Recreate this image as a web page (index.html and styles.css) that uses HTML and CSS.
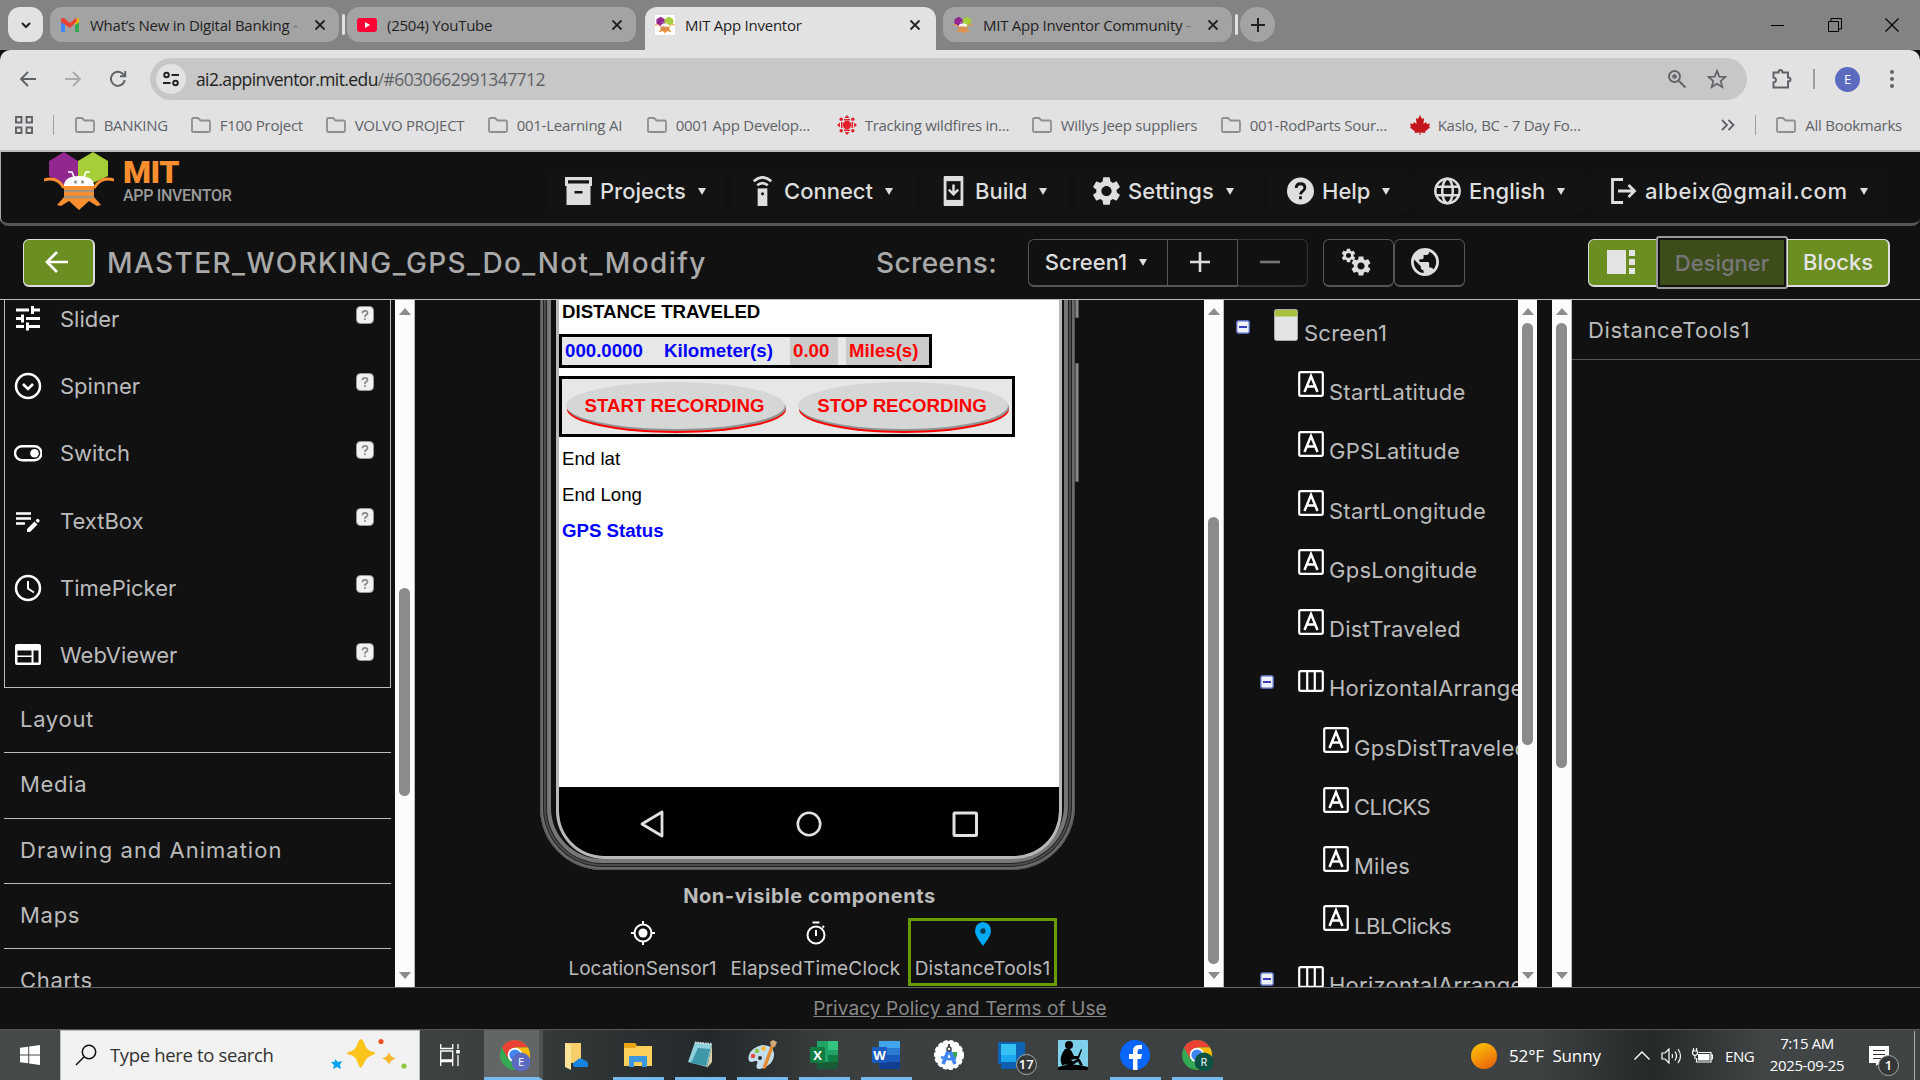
FILE: index.html
```html
<!DOCTYPE html>
<html lang="en">

<head>
    <meta charset="UTF-8">
    <title>MIT App Inventor</title>
    <link rel="stylesheet" href="styles.css">
</head>

<body>
    <!-- shared icons -->
    <svg class="defs">
        <symbol id="bee" viewBox="0 0 70 58">
            <path d="M5 9 20 0 34 9v22l-8 6L5 24z" fill="#92278f" />
            <path d="M34 9 49 0l15 9v15l-15 7-15-2z" fill="#a6ce39" />
            <path d="M0 28q13-4 20 8M70 28q-13-4-20 8" fill="none" stroke="#f98e2f" stroke-width="3" />
            <path d="M20 34h30v11l7 8-4 1-8-5-10 9-10-9-8 5-4-1 7-8z" fill="#f98e2f" />
            <path d="M20 34q0-10 15-10t15 10z" fill="#fff" />
            <path d="M30 25l-2-5h-4M40 25l2-5h4" fill="none" stroke="#fff" stroke-width="1.600" />
            <path d="M20 39h30M20 45h30" stroke="#a7937c" stroke-width="2.500" />
            <circle cx="31.500" cy="30" r="1.700" fill="#999" />
            <circle cx="38.500" cy="30" r="1.700" fill="#999" />
        </symbol>
        <symbol id="x" viewBox="0 0 12 12">
            <path d="M1.500 1.500l9 9M10.500 1.500l-9 9" stroke="#222" stroke-width="1.800" />
        </symbol>
        <symbol id="folder" viewBox="0 0 22 18">
            <path d="M2 3.500Q2 2 3.500 2H8l2.500 2.500h8Q20 4.500 20 6v8.500q0 1.500-1.500 1.500h-15Q2 16 2 14.500z" fill="none" stroke="#8e8e8e" stroke-width="1.800" />
        </symbol>
        <symbol id="help" viewBox="0 0 18 18">
            <rect x=".5" y=".5" width="17" height="17" rx="4" fill="#f1f1f1" stroke="#999" />
            <path d="M6.500 7.200q0-2.300 2.500-2.300t2.500 2.100q0 1.300-1.400 1.900T9 11M9 12.300v1.800" fill="none" stroke="#888" stroke-width="1.700" />
        </symbol>
        <symbol id="minus" viewBox="0 0 14 14">
            <rect x=".7" y=".7" width="12.600" height="12.600" rx="2" fill="#eef0fa" stroke="#5568b8" stroke-width="1.400" />
            <path d="M3 7h8" stroke="#2626b8" stroke-width="1.800" />
        </symbol>
        <symbol id="label" viewBox="0 0 26 26">
            <rect x="1.200" y="1.200" width="23.600" height="23.600" rx="1.500" fill="none" stroke="#fff" stroke-width="2.200" />
            <path d="M6.500 21 13 5l6.500 16M8.800 15.500h8.400" fill="none" stroke="#fff" stroke-width="2.500" />
        </symbol>
        <symbol id="columns" viewBox="0 0 26 22">
            <rect x="1.200" y="1.200" width="23.600" height="19.600" rx="1.500" fill="none" stroke="#fff" stroke-width="2.200" />
            <path d="M9.200 1v20M16.800 1v20" stroke="#fff" stroke-width="2.200" />
        </symbol>
        <symbol id="gear" viewBox="0 0 24 24">
            <path d="M19.140 12.940c.04-.3.060-.61.060-.94 0-.32-.02-.64-.07-.94l2.030-1.580c.18-.14.230-.41.120-.61l-1.920-3.320c-.12-.22-.37-.29-.59-.22l-2.390.960c-.5-.38-1.030-.7-1.620-.94l-.36-2.540c-.04-.24-.24-.41-.48-.41h-3.840c-.24 0-.43.170-.47.410l-.36 2.540c-.59.240-1.130.570-1.620.940l-2.390-.96c-.22-.08-.47 0-.59.220L2.740 8.870c-.12.210-.08.470.120.610l2.030 1.580c-.05.300-.09.630-.09.940s.02.640.070.940l-2.030 1.580c-.18.140-.23.410-.12.610l1.920 3.320c.12.220.370.290.590.220l2.390-.96c.5.380 1.030.700 1.620.940l.36 2.540c.05.240.240.410.480.410h3.840c.24 0 .44-.17.470-.41l.36-2.540c.59-.24 1.130-.56 1.620-.94l2.390.960c.22.080.470 0 .59-.22l1.920-3.320c.12-.22.070-.47-.12-.61l-2.010-1.580zM12 15.600c-1.980 0-3.600-1.620-3.600-3.600s1.620-3.600 3.600-3.600 3.600 1.620 3.600 3.600-1.620 3.600-3.600 3.600z" />
        </symbol>
        <symbol id="chrome" viewBox="0 0 32 32">
            <circle cx="16" cy="16" r="15" fill="#34a853" />
            <path d="M3 8.500A15 15 0 0 1 29 8.500H16l-7 11z" fill="#ea4335" />
            <path d="M29 8.500A15 15 0 0 1 16 31l7-11.500-7-11z" fill="#fbbc05" />
            <circle cx="16" cy="16" r="7.300" fill="#fff" />
            <circle cx="16" cy="16" r="5.600" fill="#4285f4" />
        </symbol>
    </svg>

    <!-- browser tabs -->
    <div class="tabstrip">
        <div class="tab-search"><svg width="12" height="12" viewBox="0 0 12 12"><path d="M2 4l4 4 4-4" fill="none" stroke="#222" stroke-width="2" /></svg></div>
        <div class="tab">
            <svg class="fav" viewBox="0 0 20 16"><path d="M1 15V3l4 3v9z" fill="#4285f4" /><path d="M15 15V6l4-3v12z" fill="#34a853" /><path d="M15 2l4-1v4l-4 3z" fill="#fbbc04" /><path d="M1 1.500 4 1l6 5 6-5 1 3-7 7L1 5z" fill="#ea4335" /></svg>
            <span>What’s New in Digital Banking <i>-</i></span>
            <svg class="close"><use href="#x" /></svg>
        </div>
        <div class="tab-sep"></div>
        <div class="tab">
            <svg class="fav" viewBox="0 0 20 16"><rect y="1" width="20" height="14" rx="3" fill="#f03" /><path d="M8 5l5 3-5 3z" fill="#fff" /></svg>
            <span>(2504) YouTube</span>
            <svg class="close"><use href="#x" /></svg>
        </div>
        <div class="tab tab-active">
            <svg class="fav fav-white"><use href="#bee" /></svg>
            <span>MIT App Inventor</span>
            <svg class="close"><use href="#x" /></svg>
        </div>
        <div class="tab">
            <svg class="fav"><use href="#bee" /></svg>
            <span>MIT App Inventor Community <i>-</i></span>
            <svg class="close"><use href="#x" /></svg>
        </div>
        <div class="tab-sep"></div>
        <div class="new-tab"><svg width="14" height="14" viewBox="0 0 14 14"><path d="M7 0v14M0 7h14" stroke="#222" stroke-width="2" /></svg></div>
        <div class="window-buttons">
            <svg width="14" height="14" viewBox="0 0 14 14"><path d="M0 7.500h13" stroke="#000" /></svg>
            <svg width="14" height="14" viewBox="0 0 14 14"><path d="M.5 3.500h10v10H.5zM3 3V.5h10.500V11H11" fill="none" stroke="#000" /></svg>
            <svg width="14" height="14" viewBox="0 0 14 14"><path d="M.5.500l13 13M13.500.500l-13 13" stroke="#000" stroke-width="1.200" /></svg>
        </div>
    </div>

    <!-- address bar -->
    <div class="chrome-bar">
        <div class="address-row">
            <div class="nav-icons">
                <svg width="18" height="18" viewBox="0 0 18 18"><path d="M17 9H2.500M9 2L2 9l7 7" fill="none" stroke="#5f6368" stroke-width="1.900" /></svg>
                <svg width="18" height="18" viewBox="0 0 18 18"><path d="M1 9h14.500M9 2l7 7-7 7" fill="none" stroke="#ababab" stroke-width="1.900" /></svg>
                <svg width="18" height="18" viewBox="0 0 18 18"><path d="M15.800 10A7 7 0 1 1 14 4l2 2M16.300 1v5.300H11" fill="none" stroke="#5f6368" stroke-width="1.900" /></svg>
            </div>
            <div class="omnibox">
                <div class="site-info"><svg width="16" height="16" viewBox="0 0 16 16"><g fill="none" stroke="#222" stroke-width="1.900"><circle cx="3.500" cy="4" r="2.300" /><circle cx="12.500" cy="12" r="2.300" /><path d="M8.500 4H16M0 12h7.500" /></g></svg></div>
                <p class="url">ai2.appinventor.mit.edu<span>/#6030662991347712</span></p>
                <svg width="20" height="20" viewBox="0 0 20 20"><g fill="none" stroke="#5f6368" stroke-width="1.900"><circle cx="7.500" cy="7.500" r="5.500" /><path d="M12 12l6.500 6.500M7.500 5v5M5 7.500h5" /></g></svg>
                <svg width="20" height="20" viewBox="0 0 20 20"><path d="M10 1.800l2.300 5.800 6.200.400-4.800 4 1.600 6.100L10 14.700l-5.300 3.400L6.300 12 1.500 8l6.200-.4z" fill="none" stroke="#5f6368" stroke-width="1.700" /></svg>
            </div>
            <svg class="puzzle" width="22" height="22" viewBox="0 0 22 22"><path d="M2.500 4.500h5q0-2.500 2-2.500t2 2.500h5.500v5q2.500 0 2.500 2t-2.500 2v6h-14.500v-5q2.500-.5 2.500-2.500t-2.500-2.500z" fill="none" stroke="#5f6368" stroke-width="2" /></svg>
            <div class="bar-sep"></div>
            <div class="avatar">E</div>
            <svg width="6" height="20" viewBox="0 0 6 20" fill="#5f6368"><circle cx="3" cy="3" r="2" /><circle cx="3" cy="10" r="2" /><circle cx="3" cy="17" r="2" /></svg>
        </div>
        <div class="bookmarks">
            <svg class="apps" width="18" height="18" viewBox="0 0 18 18"><path d="M1 1h5.500v5.500H1zM11.500 1H17v5.500h-5.500zM1 11.500h5.500V17H1zM11.500 11.500H17V17h-5.500z" fill="none" stroke="#5f6368" stroke-width="1.900" /></svg>
            <div class="bar-sep"></div>
            <div class="bookmark-list">
                <div><svg class="folder"><use href="#folder" /></svg>BANKING</div>
                <div><svg class="folder"><use href="#folder" /></svg>F100 Project</div>
                <div><svg class="folder"><use href="#folder" /></svg>VOLVO PROJECT</div>
                <div><svg class="folder"><use href="#folder" /></svg>001-Learning AI</div>
                <div><svg class="folder"><use href="#folder" /></svg>0001 App Develop...</div>
                <div><svg class="site" viewBox="0 0 20 20"><g fill="#e2202c"><circle cx="10" cy="10" r="4.200" /><path d="M10 0l2.500 3h-5zM10 20l2.500-3h-5zM0 10l3-2.500v5zM20 10l-3-2.500v5zM7 4h6v1.500H7zM7 14.500h6V16H7zM4 7h1.500v6H4zM14.500 7H16v6h-1.500z" /><circle cx="4.200" cy="4.200" r="1.700" /><circle cx="15.800" cy="4.200" r="1.700" /><circle cx="4.200" cy="15.800" r="1.700" /><circle cx="15.800" cy="15.800" r="1.700" /></g></svg>Tracking wildfires in...</div>
                <div><svg class="folder"><use href="#folder" /></svg>Willys Jeep suppliers</div>
                <div><svg class="folder"><use href="#folder" /></svg>001-RodParts Sour...</div>
                <div><svg class="site" viewBox="0 0 20 20"><path d="M10 0l2 4 2-1-.5 6L16 7l1 2 3-.5-1 3 1 1-5 4 .5 1.500-5-.5V20H9.500v-2.500l-5 .5.500-1.500-5-4 1-1-1-3L3 9l1-2 2.500 2L6 3l2 1z" fill="#c4161c" /></svg>Kaslo, BC - 7 Day Fo...</div>
            </div>
            <svg class="more" width="14" height="12" viewBox="0 0 14 12"><path d="M1 1l5 5-5 5M7.500 1l5 5-5 5" fill="none" stroke="#5f6368" stroke-width="1.800" /></svg>
            <div class="bar-sep"></div>
            <div class="all-bookmarks"><svg class="folder"><use href="#folder" /></svg>All Bookmarks</div>
        </div>
    </div>

    <!-- app header -->
    <header class="top">
        <div class="logo">
            <svg width="70" height="58"><use href="#bee" /></svg>
            <div>
                <h1>MIT</h1>
                <h2>APP INVENTOR</h2>
            </div>
        </div>
        <nav class="menu">
            <button><svg viewBox="0 0 27 28"><path d="M0 0h27v9h-1.500v19h-24V9H0z" fill="#dedede" /><path d="M3 3.300h21v3.200H3zM9.500 14h8v2.500h-8z" fill="#131313" /></svg>Projects<b></b></button>
            <button><svg viewBox="0 0 27 34"><path d="M8 14h11v20H8z" fill="#dedede" /><circle cx="13.500" cy="20" r="1.700" fill="#131313" /><path d="M3.500 6q10-9 20 0M7.500 10.500q6-5 12 0" fill="none" stroke="#dedede" stroke-width="3" /></svg>Connect<b></b></button>
            <button><svg viewBox="0 0 27 32"><rect x="3" width="21" height="32" rx="1" fill="#dedede" /><path d="M6 5.500h15v20H6z" fill="#131313" /><path d="M13.500 9v10M8.500 14.500l5 5 5-5" fill="none" stroke="#dedede" stroke-width="2.600" /></svg>Build<b></b></button>
            <button><svg viewBox="2.500 2.500 19 19" fill="#dedede"><use href="#gear" x="0" y="0" width="24" height="24" /></svg>Settings<b></b></button>
            <button><svg viewBox="0 0 28 28"><circle cx="14" cy="14" r="14" fill="#dedede" /><path d="M9.500 11q0-4.500 4.500-4.500t4.500 4q0 2-2.200 3.600T14 17.500M14 19.500v3" fill="none" stroke="#131313" stroke-width="2.900" /></svg>Help<b></b></button>
            <button><svg viewBox="0 0 28 28"><g fill="none" stroke="#dedede" stroke-width="2.600"><circle cx="14" cy="14" r="12.600" /><ellipse cx="14" cy="14" rx="5.500" ry="12.600" /><path d="M2.500 9.500h23M2.500 18.500h23" /></g></svg>English<b></b></button>
            <button class="account"><svg viewBox="0 0 27 28"><path d="M13 2.500H2.500v23H13M8 14h16M18.500 8l6 6-6 6" fill="none" stroke="#dedede" stroke-width="2.800" /></svg>albeix@gmail.com<b></b></button>
        </nav>
    </header>

    <section class="project-bar">
        <button class="green back"><svg width="23" height="22" viewBox="0 0 23 22"><path d="M23 11H3M12 1L2 11l10 10" fill="none" stroke="#fff" stroke-width="2.700" /></svg></button>
        <h3 class="project-name">MASTER_WORKING_GPS_Do_Not_Modify</h3>
        <h3 class="screens-title">Screens:</h3>
        <div class="button-group screens">
            <button class="dark pick">Screen1<b></b></button>
            <button class="dark"><svg width="20" height="20" viewBox="0 0 20 20"><path d="M10 0v20M0 10h20" stroke="#dedede" stroke-width="2.600" /></svg></button>
            <button class="dark off"><svg width="20" height="20" viewBox="0 0 20 20"><path d="M0 10h20" stroke="#777" stroke-width="2.600" /></svg></button>
        </div>
        <div class="button-group tools">
            <button class="dark"><svg width="30" height="30" viewBox="0 0 30 30" fill="#dedede"><use href="#gear" width="17" height="17" x="-1" y="0" /><use href="#gear" width="24" height="24" x="8" y="7" /></svg></button>
            <button class="dark globe"><svg width="28" height="28" viewBox="2 2 20 20" fill="#dedede"><path d="M12 2C6.480 2 2 6.480 2 12s4.480 10 10 10 10-4.480 10-10S17.520 2 12 2zm-1 17.930c-3.950-.49-7-3.850-7-7.930 0-.62.080-1.210.210-1.790L9 15v1c0 1.100.900 2 2 2v1.930zm6.900-2.540c-.26-.81-1-1.390-1.900-1.390h-1v-3c0-.55-.45-1-1-1H8v-2h2c.55 0 1-.45 1-1V7h2c1.100 0 2-.9 2-2v-.41c2.930 1.190 5 4.060 5 7.410 0 2.080-.8 3.970-2.100 5.390z" /></svg></button>
        </div>
        <div class="views">
            <button class="green panel"><svg width="28" height="24" viewBox="0 0 28 24" fill="#e4e4e4"><path d="M0 0h19v24H0zM22 0h6v6h-6zM22 9h6v6h-6zM22 18h6v6h-6z" /></svg></button>
            <button class="designer">Designer</button>
            <button class="green blocks">Blocks</button>
        </div>
    </section>

    <main>
        <section class="palette">
            <div class="palette-body">
                <ul class="components">
                    <li><svg viewBox="0 0 28 28"><path d="M2 5h13M20 5h6M18.500 1v8M2 13.500h5M12 13.500h14M8.500 9.500v8M2 21.500h8M15 21.500h11M13.500 17.500v8" stroke="#fff" stroke-width="3" /></svg>Slider<svg class="help"><use href="#help" /></svg></li>
                    <li><svg viewBox="0 0 28 28"><circle cx="14" cy="14" r="12" fill="none" stroke="#fff" stroke-width="2.500" /><path d="M9 12l5 5 5-5" fill="none" stroke="#fff" stroke-width="2.600" /></svg>Spinner<svg class="help"><use href="#help" /></svg></li>
                    <li><svg viewBox="0 0 28 28"><rect x="1" y="7.200" width="26.500" height="14" rx="7" fill="none" stroke="#fff" stroke-width="2.400" /><circle cx="20.500" cy="14.200" r="4.300" fill="#fff" /></svg>Switch<svg class="help"><use href="#help" /></svg></li>
                    <li><svg viewBox="0 0 28 28"><path d="M2 6.500h15M2 11.500h15M2 16.500h9" stroke="#fff" stroke-width="2.500" /><path d="M13 22v3h3l7.500-7.500-3-3zM21.500 13.500l1.500-1.500q1-.5 2 .5t.5 2L24 16z" fill="#fff" /></svg>TextBox<svg class="help"><use href="#help" /></svg></li>
                    <li><svg viewBox="0 0 28 28"><circle cx="14" cy="14" r="12" fill="none" stroke="#fff" stroke-width="2.500" /><path d="M14 7v7.500l6 4" fill="none" stroke="#fff" stroke-width="2" /></svg>TimePicker<svg class="help"><use href="#help" /></svg></li>
                    <li><svg viewBox="0 0 28 28"><rect x="1" y="3" width="26" height="21" rx="2" fill="#fff" /><path d="M3.500 9.500h14v5h-14zM3.500 16h14v5.500h-14zM19.500 9.500h5v12h-5z" fill="#111" /></svg>WebViewer<svg class="help"><use href="#help" /></svg></li>
                </ul>
                <ul class="categories">
                    <li>Layout</li>
                    <li>Media</li>
                    <li>Drawing and Animation</li>
                    <li>Maps</li>
                    <li>Charts</li>
                </ul>
            </div>
            <div class="scrollbar scroll-palette"><i></i></div>
        </section>

        <section class="viewer">
            <div class="viewer-body">
                <div class="phone">
                    <div class="screen">
                        <p class="strong">DISTANCE TRAVELED</p>
                        <div class="row distance">
                            <span>000.0000</span>
                            <span>Kilometer(s)</span>
                            <span class="miles">0.00</span>
                            <span class="miles">Miles(s)</span>
                        </div>
                        <div class="row recording">
                            <button class="start">START RECORDING</button>
                            <button class="stop">STOP RECORDING</button>
                        </div>
                        <p>End lat</p>
                        <p>End Long</p>
                        <p class="strong blue">GPS Status</p>
                        <div class="phone-nav">
                            <svg width="28" height="30" viewBox="0 0 28 30"><path d="M24 3v24L4 15z" fill="none" stroke="#e2e2e2" stroke-width="2.800" stroke-linejoin="round" /></svg>
                            <svg width="28" height="30" viewBox="0 0 28 30"><circle cx="14" cy="15" r="11.200" fill="none" stroke="#e2e2e2" stroke-width="2.600" /></svg>
                            <svg width="28" height="30" viewBox="0 0 28 30"><rect x="2" y="4" width="22.500" height="22.500" rx="1" fill="none" stroke="#e2e2e2" stroke-width="3" /></svg>
                        </div>
                    </div>
                    <div class="side-button power"></div>
                    <div class="side-button volume"></div>
                </div>
                <h4>Non-visible components</h4>
                <div class="non-visible">
                    <div><svg width="24" height="24" viewBox="0 0 24 24"><g fill="none" stroke="#fff" stroke-width="2"><circle cx="12" cy="12" r="8.500" /><path d="M12 0v4M12 20v4M0 12h4M20 12h4" /></g><circle cx="12" cy="12" r="4.500" fill="#fff" /></svg>LocationSensor1</div>
                    <div><svg width="24" height="24" viewBox="0 0 24 24"><g fill="none" stroke="#fff" stroke-width="2"><circle cx="12" cy="14" r="8.500" /><path d="M8.500 1.500h7M12 9v6M18.500 5l1.500 1.500" /></g></svg>ElapsedTimeClock</div>
                    <div class="selected"><svg width="24" height="24" viewBox="0 0 24 24"><path d="M12 0Q4 1 4 9q0 5 8 15 8-10 8-15 0-8-8-9z" fill="#00a9f4" /><circle cx="12" cy="9" r="2.700" fill="#0d3a50" /></svg>DistanceTools1</div>
                </div>
            </div>
            <div class="scrollbar scroll-viewer"><i></i></div>
        </section>

        <section class="tree">
            <ul>
                <li class="root"><svg class="minus"><use href="#minus" /></svg><svg class="screen-icon" viewBox="0 0 24 32"><rect x=".5" y=".5" width="23" height="31" rx="2" fill="#e4e4e4" stroke="#aaa" /><path d="M1 2q0-1 1-1h20q1 0 1 1v5.500H1z" fill="#a8c13c" /></svg>Screen1</li>
                <li><svg class="icon"><use href="#label" /></svg>StartLatitude</li>
                <li><svg class="icon"><use href="#label" /></svg>GPSLatitude</li>
                <li><svg class="icon"><use href="#label" /></svg>StartLongitude</li>
                <li><svg class="icon"><use href="#label" /></svg>GpsLongitude</li>
                <li><svg class="icon"><use href="#label" /></svg>DistTraveled</li>
                <li class="parent"><svg class="minus"><use href="#minus" /></svg><svg class="icon"><use href="#columns" /></svg>HorizontalArrangement1</li>
                <li class="child"><svg class="icon"><use href="#label" /></svg>GpsDistTraveled</li>
                <li class="child caps"><svg class="icon"><use href="#label" /></svg>CLICKS</li>
                <li class="child"><svg class="icon"><use href="#label" /></svg>Miles</li>
                <li class="child caps"><svg class="icon"><use href="#label" /></svg>LBLClicks</li>
                <li class="parent"><svg class="minus"><use href="#minus" /></svg><svg class="icon"><use href="#columns" /></svg>HorizontalArrangement2</li>
            </ul>
            <div class="scrollbar scroll-tree"><i></i></div>
        </section>

        <section class="properties">
            <div class="scrollbar scroll-properties"><i></i></div>
            <div class="property-title">DistanceTools1</div>
        </section>
    </main>

    <footer><a href="#">Privacy Policy and Terms of Use</a></footer>

    <!-- windows taskbar -->
    <div class="taskbar">
        <div class="start-menu"><svg width="20" height="20" viewBox="0 0 20 20" fill="#fff"><path d="M0 2.800L8.200 1.700v7.800H0zM9.200 1.500L20 0v9.500H9.200zM0 10.500h8.200v7.800L0 17.200zM9.200 10.500H20V20L9.200 18.500z" /></svg></div>
        <div class="search">
            <svg width="22" height="22" viewBox="0 0 22 22"><circle cx="14" cy="8" r="6.700" fill="none" stroke="#111" stroke-width="1.500" /><path d="M9.200 12.800L1 21" stroke="#111" stroke-width="1.500" /></svg>
            <span>Type here to search</span>
            <svg width="78" height="34" viewBox="0 0 78 34"><path d="M31 1q2 0 4 6t9 7q2 1 0 2.500-7 2-9 6.500t-4 7q-2-1-4-7t-9-6.500q-2-1.500 0-2.500 7-1 9-7t4-6z" fill="#fcc41b" /><path d="M59 14q1 5 7 6.500-6 1.500-7 6.500-1-5-7-6.500 6-1.500 7-6.500z" fill="#fbb72b" /><path d="M5 21l3 3 4-1-2 4 1 4-4-2-4 2 1-4-3-3 4-.5z" fill="#00a4ef" /><circle cx="51" cy="3.500" r="2.600" fill="#f25022" /><circle cx="74" cy="28" r="2.600" fill="#8cc63f" /></svg>
        </div>
        <div class="task-view"><svg width="20" height="24" viewBox="0 0 20 24"><path d="M.7 1v4.500h12V1M.7 8h12v9h-12zM.7 23v-4.500h12V23M18 1v5M18 12v11" fill="none" stroke="#fff" stroke-width="1.300" /><path d="M16.200 7h3.600v3.500h-3.600z" fill="#fff" /></svg></div>
        <div class="apps-row">
            <div class="app current"><svg viewBox="0 0 32 32"><use href="#chrome" /><circle cx="22" cy="23" r="9.500" fill="#5c6bc0" /><text x="22" y="27" class="badge-letter">E</text></svg></div>
            <div class="app"><svg viewBox="0 0 32 32"><path d="M5 4h16v20H11v6l-6-3z" fill="#f7cf6b" /><path d="M5 4l6 2v25l-6-3z" fill="#fee39a" /><path d="M14 28q-3-4 2-6 4-5 8-1 5 1 4 7z" fill="#1683e0" /></svg></div>
            <div class="app open"><svg viewBox="0 0 32 32"><path d="M2 4h11l2 3h15v20H2z" fill="#fbd05d" /><path d="M2 4h11l2 3-2 2H2z" fill="#e8a317" /><path d="M7 28V17h18v11h-5v-5h-8v5z" fill="#3c97e0" /></svg></div>
            <div class="app open"><svg viewBox="0 0 32 32"><path d="M11 3l17 2-5 23-19-5z" fill="#8ed0dc" /><path d="M14 9l12 1-4 17-15-3z" fill="#3f98a8" /><path d="M28 5v18l-5 6z" fill="#d8cda6" /><path d="M11 3.500l17 1.500" stroke="#ddd" stroke-width="2" stroke-dasharray="1.500 1" /></svg></div>
            <div class="app open"><svg viewBox="0 0 32 32"><path d="M16 6Q28 6 28 16T14 30q-5 0-3-5t-5-2q-5 0-3-7T16 6z" fill="#c3dfee" /><circle cx="7" cy="17" r="2.300" fill="#e74c3c" /><circle cx="11" cy="12" r="2.300" fill="#8bc34a" /><circle cx="17.500" cy="9.500" r="2.300" fill="#ffb52e" /><circle cx="14" cy="19" r="2" fill="#2f3334" /><path d="M28 7L20 29l-3 1 0-3L25 6z" fill="#e38b33" /><path d="M24 3l3-2 4 2-2 5-4-1z" fill="#d3a77a" /></svg></div>
            <div class="app open"><svg viewBox="0 0 32 32"><path d="M9 2h21v28H9z" fill="#21a366" /><path d="M20 2h10v9H20z" fill="#33c481" /><path d="M20 16h10v7H20z" fill="#107c41" /><path d="M9 23h21v7H9z" fill="#185c37" /><rect x="2" y="8" width="15" height="16" rx="1" fill="#107c41" /><text x="9.500" y="21" class="office-letter">X</text></svg></div>
            <div class="app open"><svg viewBox="0 0 32 32"><path d="M9 2h21v28H9z" fill="#41a5ee" /><path d="M9 9h21v7H9z" fill="#2b7cd3" /><path d="M9 16h21v7H9z" fill="#185abd" /><path d="M9 23h21v7H9z" fill="#103f91" /><rect x="2" y="8" width="15" height="16" rx="1" fill="#185abd" /><text x="9.500" y="21" class="office-letter">W</text></svg></div>
            <div class="app"><svg viewBox="0 0 32 32"><circle cx="16" cy="16" r="14" fill="#fff" stroke="#fff" stroke-dasharray="4 2" stroke-width="2" /><path d="M19 13h5q1 3-1 6l-3 1z" fill="#34a853" /><path d="M16 10L10 25M16 10l6 15" fill="none" stroke="#4285f4" stroke-width="3.600" /><path d="M8 18q8 4 15 1" fill="none" stroke="#4285f4" stroke-width="2.600" /><circle cx="16" cy="10" r="2" fill="#fff" stroke="#444" stroke-width="1.500" /><path d="M16 5v3" stroke="#444" stroke-width="2" /></svg></div>
            <div class="app"><svg viewBox="0 0 32 32"><path d="M3 3h27v22H3z" fill="#0f63b5" /><path d="M6 5h15v25H6z" fill="#1ba8ec" /><path d="M6 5h15v11H6z" fill="#35c1f1" /><path d="M6 23h15v7H6z" fill="#0f5fb0" /></svg><span class="count">17</span></div>
            <div class="app"><svg viewBox="0 0 32 32"><rect x="1" y="1" width="30" height="30" rx="1" fill="#7fd0ea" /><path d="M1 28q14-5 30 0v3H1z" fill="#000" /><circle cx="12" cy="6" r="4" fill="#000" /><path d="M8 10q5-2 7 3l2 4 4 0 3-7 1 .500-3 9-6 1-2 0 2 2 5-3 2 1 3 6-3 0-2-4-6 4-7-1-3 1q-4-8 3-16.500z" fill="#000" /></svg></div>
            <div class="app open"><svg viewBox="0 0 32 32"><circle cx="16" cy="16" r="15" fill="#0866ff" /><path d="M14 31V20h-4v-5h4v-3q0-6 6-6h3v4h-2q-2.500 0-2.500 3v2H23l-1 5h-3.500v11z" fill="#fff" /></svg></div>
            <div class="app open"><svg viewBox="0 0 32 32"><use href="#chrome" /><circle cx="23" cy="23" r="9.500" fill="#0b5345" /><text x="23" y="27" class="badge-letter">R</text></svg></div>
        </div>
        <div class="tray">
            <div class="sun"></div>
            <span class="weather">52°F&nbsp; Sunny</span>
            <svg class="up" width="16" height="9" viewBox="0 0 16 9"><path d="M.5 8.500L8 1l7.500 7.500" fill="none" stroke="#fff" stroke-width="1.400" /></svg>
            <svg class="sound" width="22" height="18" viewBox="0 0 22 18"><path d="M1 6v6h3l4 4V2L4 6zM11 7q1 2 0 4M14 4.500q3 4.500 0 9M17 2q5 7 0 14" fill="none" stroke="#fff" stroke-width="1.200" /></svg>
            <svg class="battery" width="21" height="16" viewBox="0 0 21 16"><path d="M6 6h11.500v6.500H6z" fill="#fff" /><path d="M6.500 4.500h12.500v9.500H4.500v-4M19 7h1.500v4H19M1.500 0v3M4.500 0v3M.6 3h4.800v3L3 8 .6 6zM3 8v3" fill="none" stroke="#fff" stroke-width="1.200" /></svg>
            <span class="lang">ENG</span>
            <div class="clock"><span>7:15 AM</span><span>2025-09-25</span></div>
            <div class="notice"><svg width="20" height="20" viewBox="0 0 20 20"><path d="M0 0h20v17H11l-4 3v-3H0z" fill="#fff" /><path d="M4 4.500h12M4 8.500h12M4 12.500h8" stroke="#333" stroke-width="1.200" /></svg><span class="count">1</span></div>
        </div>
    </div>
</body>

</html>
```
FILE: styles.css
```css
* {
    margin: 0;
    padding: 0;
    box-sizing: border-box;
}

body {
    width: 1920px;
    height: 1080px;
    overflow: hidden;
    background-color: #111;
    color: #bbb;
    font-family: Inter, sans-serif;
}

ul {
    list-style: none;
}

button {
    font: inherit;
    letter-spacing: inherit;
    color: inherit;
    background: none;
    border: none;
}

svg {
    flex: none;
}

.defs {
    display: none;
}

/* tabs */
.tabstrip {
    display: flex;
    height: 50px;
    padding: 7px 21px 0 8px;
    background-color: #838383;
    font-family: "Open Sans", sans-serif;
    font-size: 15px;
    letter-spacing: -0.25px;
    color: #1f1f1f;
}

.tab-search,
.new-tab {
    display: flex;
    align-items: center;
    justify-content: center;
    width: 35px;
    height: 35px;
    border-radius: 12px;
    background-color: #e2e2e2;
}

.tab-search {
    margin-right: 7px;
}

.new-tab {
    border-radius: 50%;
    background-color: #a3a3a3;
}

.tab {
    display: flex;
    align-items: center;
    width: 289px;
    height: 35px;
    padding: 0 13px 0 10px;
    border-radius: 12px;
    background-color: #a3a3a3;
    white-space: nowrap;
}

.tab span {
    flex: 1;
}

.tab i {
    font-style: normal;
    opacity: 0.4;
}

.fav {
    width: 20px;
    height: 20px;
    margin-right: 10px;
}

.fav-white {
    background-color: #fff;
}

.close {
    width: 12px;
    height: 12px;
}

.tab-sep {
    width: 3px;
    height: 21px;
    margin: 7px 2px 0 3px;
    border-radius: 2px;
    background-color: #e2e2e2;
}

.tab-active {
    width: 291px;
    height: 43px;
    margin: 0 7px 0 9px;
    padding: 0 15px 8px 10px;
    border-radius: 12px 12px 0 0;
    background-color: #e2e2e2;
}

.window-buttons {
    display: flex;
    gap: 43px;
    margin: 11px 0 0 auto;
}

/* address bar + bookmarks */
.chrome-bar {
    height: 102px;
    border-bottom: 2px solid #bdbdbd;
    background-color: #e2e2e2;
    border-radius: 10px 10px 0 0;
    font-family: "Open Sans", sans-serif;
    color: #5f6368;
}

.address-row {
    display: flex;
    align-items: center;
    height: 58px;
    padding-right: 25px;
}

.nav-icons {
    display: flex;
    gap: 27px;
    width: 150px;
    padding-left: 19px;
}

.omnibox {
    display: flex;
    align-items: center;
    gap: 20px;
    width: 1597px;
    height: 42px;
    padding: 0 20px 0 6px;
    border-radius: 21px;
    background-color: #c7c7c7;
}

.site-info {
    display: flex;
    align-items: center;
    justify-content: center;
    width: 30px;
    height: 30px;
    border-radius: 50%;
    background-color: #e2e2e2;
}

.url {
    flex: 1;
    margin-left: -10px;
    font-size: 17.5px;
    letter-spacing: -0.6px;
    color: #1f1f1f;
}

.url span {
    color: #5f6368;
}

.puzzle {
    margin-left: 24px;
}

.bar-sep {
    width: 2px;
    height: 20px;
    background-color: #a0a0a0;
}

.address-row .bar-sep {
    margin: 0 20px;
}

.avatar {
    width: 25px;
    height: 25px;
    margin-right: 29px;
    border-radius: 50%;
    background-color: #5c6bc0;
    color: #fff;
    font-size: 13px;
    line-height: 25px;
    text-align: center;
}

.bookmarks {
    display: flex;
    align-items: center;
    height: 34px;
    padding: 0 18px 0 15px;
    font-size: 15px;
    letter-spacing: -0.25px;
}

.apps {
    margin-right: 20px;
}

.bookmark-list {
    display: grid;
    grid-template-columns: 116px 135px 162px 159px 191px 194px 189px 190px 180px;
    width: 1516px;
    margin-left: 20px;
    white-space: nowrap;
}

.bookmark-list div,
.all-bookmarks {
    display: flex;
    align-items: center;
}

.folder {
    width: 22px;
    height: 18px;
    margin-right: 8px;
}

.site {
    width: 20px;
    height: 20px;
    margin-right: 8px;
}

.more {
    margin: 0 20px 0 131px;
}

.all-bookmarks {
    margin-left: 20px;
    white-space: nowrap;
}

/* app header */
.top {
    display: flex;
    height: 74px;
    border-left: 1px solid #aaa;
    border-bottom: 3px solid #555;
    border-radius: 0 0 8px 8px;
    color: #dedede;
}

.logo {
    display: flex;
    width: 546px;
    padding: 0 0 0 43px;
}

.logo div {
    padding: 4px 0 0 9px;
}

.logo h1 {
    height: 32px;
    font: 900 32px/32px "Roboto", sans-serif;
    letter-spacing: -0.5px;
    color: #f98e2f;
}

.logo h2 {
    font: 500 16px/16px "Roboto", sans-serif;
    letter-spacing: -0.3px;
    white-space: nowrap;
    color: #9a9a9a;
}

.menu {
    display: grid;
    grid-template-columns: 184px 191px 153px 194px 147px 176px 303px;
    height: 46px;
    margin-top: 16px;
    font-size: 22px;
    font-weight: 500;
}

.menu button {
    display: flex;
    align-items: center;
    margin-right: 7px;
    padding-left: 18px;
    border-radius: 6px;
    background-color: #131313;
    white-space: nowrap;
}

.menu .account {
    letter-spacing: 0.6px;
}

.menu svg {
    width: 27px;
    height: 30px;
    margin-right: 8px;
}

.menu b,
.pick b {
    margin: 0 0 0 12px;
    border: 4px solid transparent;
    border-top: 7px solid #dedede;
    border-bottom: none;
}

/* project bar */
.project-bar {
    display: flex;
    align-items: center;
    height: 74px;
    padding-left: 23px;
    border-bottom: 1px solid #bbb;
    color: #a9a9a9;
}

.project-bar h3 {
    font-size: 28px;
    font-weight: 500;
    white-space: nowrap;
}

.project-bar button {
    display: flex;
    align-items: center;
    justify-content: center;
    height: 48px;
    font-size: 22px;
    font-weight: 500;
}

.green {
    border: 1px solid #ddd;
    border-width: 1px 2px 2px 1px;
    border-radius: 6px;
    background-color: #6b8e23;
    color: #e4e4e4;
}

.project-bar .back {
    width: 72px;
    margin-right: 12px;
    padding-right: 4px;
}

.project-name {
    width: 769px;
    letter-spacing: 1.4px;
}

.screens-title {
    width: 152px;
    letter-spacing: 0.4px;
}

.button-group {
    display: flex;
}

.button-group .dark {
    width: 71px;
    padding-right: 6px;
    border: 1px solid #555;
    border-bottom-width: 2px;
    border-radius: 6px;
    color: #dedede;
}

.screens .dark + .dark {
    margin-left: -1px;
    border-radius: 0;
}

.screens .dark.pick {
    width: 140px;
    padding-right: 4px;
    border-radius: 6px 0 0 6px;
}

.screens {
    margin-right: 15px;
}

.screens .dark + .dark.off {
    border-color: #333;
    border-left-color: #555;
    border-radius: 0 6px 6px 0;
}

.tools {
    width: 265px;
}

.tools .dark.globe {
    padding-right: 9px;
}

.views {
    display: flex;
    align-items: center;
}

.project-bar .panel {
    width: 70px;
    padding-right: 4px;
    border-radius: 6px 0 0 6px;
}

.project-bar .designer {
    width: 132px;
    height: 53px;
    margin: 0 -1px 0 -2px;
    border: 2px solid #999;
    border-radius: 3px;
    background-color: #3c4d1a;
    box-shadow: inset 0 0 0 2px #111;
    color: #777;
}

.blocks {
    width: 103px;
    border-radius: 0 6px 6px 0;
}

/* scrollbars */
.scrollbar {
    display: flex;
    flex-direction: column;
    align-items: center;
    width: 20px;
    height: 687px;
    padding: 8px 0;
    background-color: #fcfcfc;
    border-right: 1px solid #bbb;
    flex: none;
}

.scrollbar::before,
.scrollbar::after {
    content: "";
    border: 6.5px solid transparent;
    border-top: none;
    border-bottom: 7px solid #8b8b8b;
}

.scrollbar::after {
    margin-top: auto;
    border-top: 7px solid #8b8b8b;
    border-bottom: none;
}

.scrollbar i {
    width: 11px;
    border-radius: 6px;
    background-color: #8b8b8b;
}

.scroll-palette i {
    height: 208px;
    margin-top: 273px;
}

.scroll-viewer i {
    height: 447px;
    margin-top: 202px;
}

.scroll-tree i {
    height: 422px;
    margin-top: 8px;
}

.scroll-properties i {
    height: 445px;
    margin-top: 8px;
}

/* workspace */
main {
    display: flex;
    height: 688px;
    overflow: hidden;
    border-bottom: 1px solid #666;
    font-size: 22px;
}

.palette {
    display: flex;
    width: 415px;
}

.palette-body {
    width: 395px;
    padding: 0 4px;
}

.components {
    height: 388px;
    border: 1px solid #bbb;
    border-top: none;
}

.components li {
    display: flex;
    align-items: center;
    height: 67.3px;
    padding: 0 16px 30px 9px;
}

.components li svg {
    width: 28px;
    height: 28px;
    margin-right: 18px;
}

.components li .help {
    width: 18px;
    height: 18px;
    margin: 0 0 7px auto;
}

.categories li {
    height: 65.3px;
    padding-left: 16px;
    border-bottom: 1px solid #bbb;
    line-height: 62px;
    letter-spacing: 0.7px;
}

.categories li:nth-child(3) {
    letter-spacing: 1px;
}

.viewer {
    display: flex;
    width: 809px;
}

.viewer-body {
    width: 789px;
    height: 687px;
    overflow: hidden;
}

.phone {
    position: relative;
    width: 535px;
    height: 590px;
    margin: -20px 0 0 125px;
    padding: 0 13px 12px;
    border-radius: 0 0 64px 62px;
    background-color: #101010;
    box-shadow: inset 0 0 0 1px #555, inset 0 0 0 3px #6a6a6a, inset 0 0 0 4px #222, inset 0 0 0 6px #4c4c4c, inset 0 0 0 7px #222, inset 0 0 0 11px #777;
}

.screen {
    display: flex;
    flex-direction: column;
    width: 506px;
    height: 579px;
    margin-left: 3px;
    padding-top: 20px;
    overflow: hidden;
    border: 3px solid #b8b8b8;
    border-top: none;
    border-radius: 0 0 48px 48px;
    background-color: #fff;
    color: #000;
    font: 18.67px/36px "Liberation Sans", sans-serif;
}

.screen p {
    height: 36px;
    padding-left: 3px;
}

.screen .strong {
    font-weight: bold;
}

.screen p.strong:first-child {
    height: 34px;
    line-height: 24px;
}

.blue,
.distance span {
    color: #00f;
}

.row {
    display: flex;
    align-items: center;
    border: 3px solid #000;
    background-color: #e7e7e7;
    font-weight: bold;
}

.distance {
    width: 373px;
    height: 34px;
    line-height: 28px;
}

.distance span {
    width: 99px;
    padding-left: 3px;
}

.distance span:nth-child(2) {
    width: 129px;
}

.distance .miles {
    width: 48px;
    margin-right: 8px;
    background-color: #cbcbcb;
    color: #f00;
}

.distance .miles:last-child {
    width: 83px;
    margin: 0;
}

.recording {
    gap: 13px;
    width: 456px;
    height: 61px;
    margin: 8px 0 4px;
    padding-left: 4px;
}

.recording button {
    width: 219px;
    height: 47px;
    margin-top: -3px;
    padding: 1px 2px 0 0;
    border-radius: 50%;
    background-color: #d5d7d6;
    box-shadow: 1px 2px 0 #929594, 1px 4px 0 #f00;
    color: #f00;
    white-space: nowrap;
}

.recording .stop {
    width: 210px;
}

.phone-nav {
    display: flex;
    justify-content: space-between;
    width: 500px;
    height: 69px;
    margin-top: auto;
    padding: 22px 79px 0;
    background-color: #000;
}

.side-button {
    position: absolute;
    left: 535px;
    width: 4px;
    border: 1px solid #555;
    background-color: #888;
}

.power {
    top: 0;
    height: 38px;
}

.volume {
    top: 83px;
    height: 119px;
}

.viewer h4 {
    height: 48px;
    padding: 11px 0 0;
    font-size: 20px;
    line-height: 30px;
    letter-spacing: 0.55px;
    text-align: center;
}

.non-visible {
    display: flex;
    gap: 7px;
    padding-left: 147px;
    font-size: 19px;
}

.non-visible div {
    display: flex;
    flex-direction: column;
    align-items: center;
    width: 161px;
    height: 68px;
    padding-top: 3px;
    white-space: nowrap;
    line-height: 24px;
}

.non-visible svg {
    margin-bottom: 12px;
}

.non-visible div:nth-child(2) {
    width: 171px;
    letter-spacing: 0.2px;
}

.non-visible .selected {
    width: 149px;
    padding-top: 1px;
    border: 3px solid #6a9b00;
    letter-spacing: 0.2px;
    line-height: 22px;
}

.tree {
    display: flex;
    width: 313px;
    overflow: hidden;
}

.tree ul {
    width: 294px;
    overflow: hidden;
    padding: 3px 0 0 12px;
    flex: none;
}

.tree li {
    display: flex;
    align-items: center;
    height: 59.3px;
    padding-left: 62px;
    white-space: nowrap;
    letter-spacing: 0.25px;
}

.tree .caps {
    letter-spacing: -0.5px;
}

.tree .icon {
    width: 26px;
    height: 26px;
    margin: 0 5px 15px 0;
}

.tree .minus {
    width: 14px;
    height: 14px;
    margin: 0 24px 12px 0;
}

.tree .screen-icon {
    width: 24px;
    height: 32px;
    margin: 0 6px 15px 0;
}

.tree .root {
    padding-left: 0;
}

.tree .parent {
    padding-left: 24px;
}

.tree .child {
    padding-left: 87px;
}

.properties {
    display: flex;
    width: 383px;
    padding-left: 15px;
}

.property-title {
    width: 348px;
    height: 60px;
    padding-left: 16px;
    border-bottom: 1px solid #555;
    line-height: 60px;
    letter-spacing: 0.6px;
}

footer {
    height: 42px;
    border-bottom: 1px solid #555;
    font-size: 19px;
    line-height: 42px;
    letter-spacing: 0.1px;
    text-align: center;
}

footer a {
    color: #888;
}

/* taskbar */
.taskbar {
    display: flex;
    height: 51px;
    background: linear-gradient(90deg, #464a4a 0, #3c4041 25%, #23282a 37%, #3c4041 44%, #3e4243 80%, #24292a 86%, #414546 92%, #3f4344 100%);
    color: #fff;
    font-family: "Open Sans", sans-serif;
}

.start-menu {
    width: 60px;
    padding: 15px 0 0 20px;
}

.search {
    display: flex;
    align-items: center;
    width: 360px;
    padding: 0 11px 2px 14px;
    background-color: #f2f2f2;
    border: 1px solid #bbb;
    color: #333;
    font-size: 18.5px;
    letter-spacing: -0.35px;
}

.search span {
    flex: 1;
    margin-left: 13px;
}

.task-view {
    width: 64px;
    padding: 13px 0 0 20px;
}

.apps-row {
    display: flex;
    width: 985px;
}

.app {
    position: relative;
    width: 51px;
    height: 50px;
    margin-right: 11.1px;
    padding: 9px 0 0 9px;
}

.app svg {
    width: 32px;
    height: 32px;
}

.app.open {
    border-bottom: 3px solid #76b9ed;
}

.app.current {
    width: 59px;
    margin-right: 8px;
    padding-left: 15px;
    border-right: 4px solid #505455;
    border-bottom: 3px solid #76b9ed;
    background-color: #626667;
}

.badge-letter {
    fill: #fff;
    font-size: 11px;
    text-anchor: middle;
}

.office-letter {
    fill: #fff;
    font-size: 13px;
    font-weight: bold;
    text-anchor: middle;
}

.count {
    position: absolute;
    left: 30px;
    top: 24px;
    width: 21px;
    height: 21px;
    border: 1px solid #aaa;
    border-radius: 50%;
    background-color: #333738;
    font-size: 13px;
    font-weight: 600;
    line-height: 19px;
    text-align: center;
}

.tray {
    display: flex;
    align-items: center;
    flex: 1;
    padding-left: 2px;
    white-space: nowrap;
}

.sun {
    width: 26px;
    height: 26px;
    border-radius: 50%;
    background: linear-gradient(150deg, #ffcb05, #e8590c);
}

.weather {
    width: 137px;
    padding-left: 12px;
    font-size: 17px;
    letter-spacing: -0.15px;
}

.sound {
    margin: 0 9px 0 11px;
}

.lang {
    width: 45px;
    padding-left: 12px;
    font-size: 15px;
    letter-spacing: -0.4px;
}

.clock {
    display: flex;
    flex-direction: column;
    width: 78px;
    margin: -4px 0 0 10px;
    font-size: 15px;
    line-height: 22px;
    letter-spacing: -0.4px;
    text-align: center;
}

.notice {
    position: relative;
    height: 50px;
    width: 46px;
    margin-left: 23px;
    padding-top: 15px;
    border-right: 1px solid #aaa;
}

.notice .count {
    left: 9px;
}
```
